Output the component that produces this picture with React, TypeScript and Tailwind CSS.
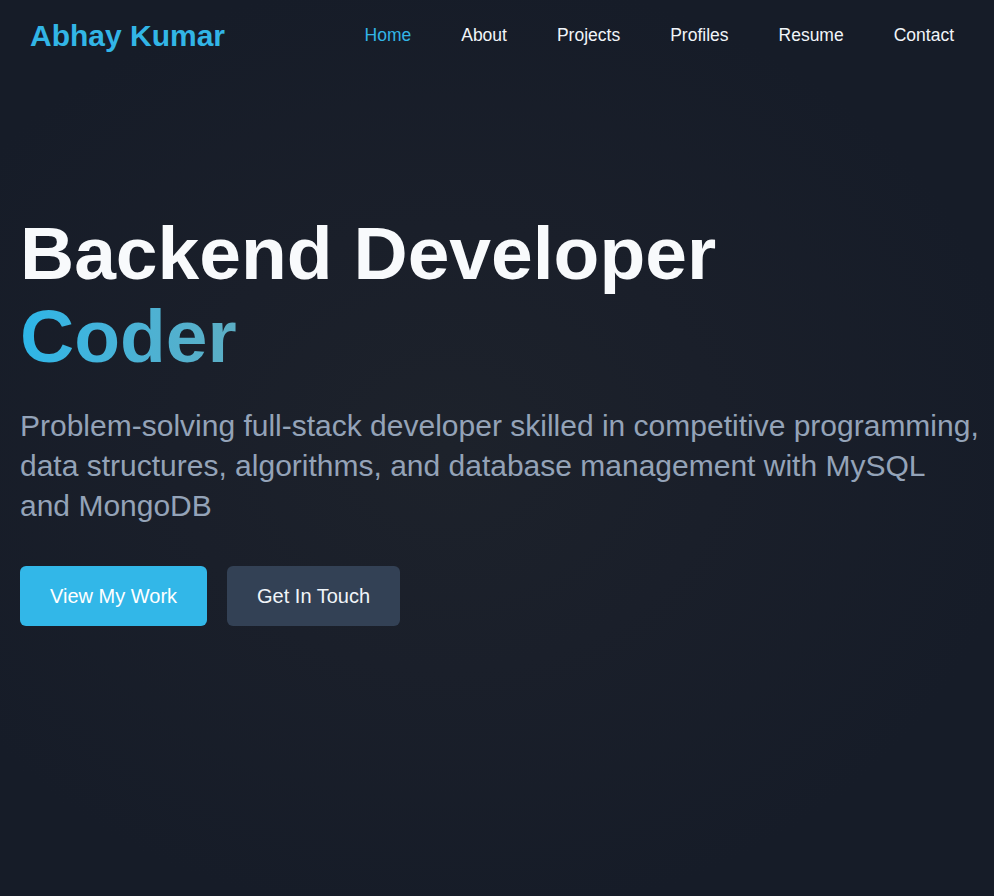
export default function App() {
  const links = ["Home", "About", "Projects", "Profiles", "Resume", "Contact"];
  return (
    <div
      className="min-h-[896px] w-full bg-[#161c28] bg-[radial-gradient(ellipse_at_45%_50%,#1d222b_0%,#1a1f2a_35%,#161c28_75%)] text-white"
      style={{ fontFamily: '"Liberation Sans", Arial, sans-serif' }}
    >
      <nav className="flex h-[70px] items-center justify-between pl-[30px] pr-[40px]">
        <div className="text-[30px] font-bold text-[#32b5e6]">Abhay Kumar</div>
        <ul className="flex items-center gap-[50px] text-[17.5px]">
          {links.map((l, i) => (
            <li key={l} className={i === 0 ? "text-[#32b5e6]" : "text-[#f1f5f9] font-medium"}>
              {l}
            </li>
          ))}
        </ul>
      </nav>
      <section className="pl-[20px] pt-[142px]">
        <h1 className="text-[75px] font-bold leading-[1.1] text-[#f8fafc]">
          Backend Developer
          <br />
          <span className="bg-gradient-to-r from-[#2cb6e8] to-[#5caec4] bg-clip-text text-transparent">
            Coder
          </span>
        </h1>
        <p className="mt-[29px] w-[962px] text-[30px] leading-[40px] text-[#94a3b8]">
          Problem-solving full-stack developer skilled in competitive programming,
          data structures, algorithms, and database management with MySQL and MongoDB
        </p>
        <div className="mt-[40px] flex gap-[20px]">
          <button className="h-[60px] rounded-md bg-[#32b7e8] px-[30px] text-[20px] text-white">
            View My Work
          </button>
          <button className="h-[60px] rounded-md bg-[#334155] px-[30px] text-[20px] text-[#f1f5f9]">
            Get In Touch
          </button>
        </div>
      </section>
    </div>
  );
}
